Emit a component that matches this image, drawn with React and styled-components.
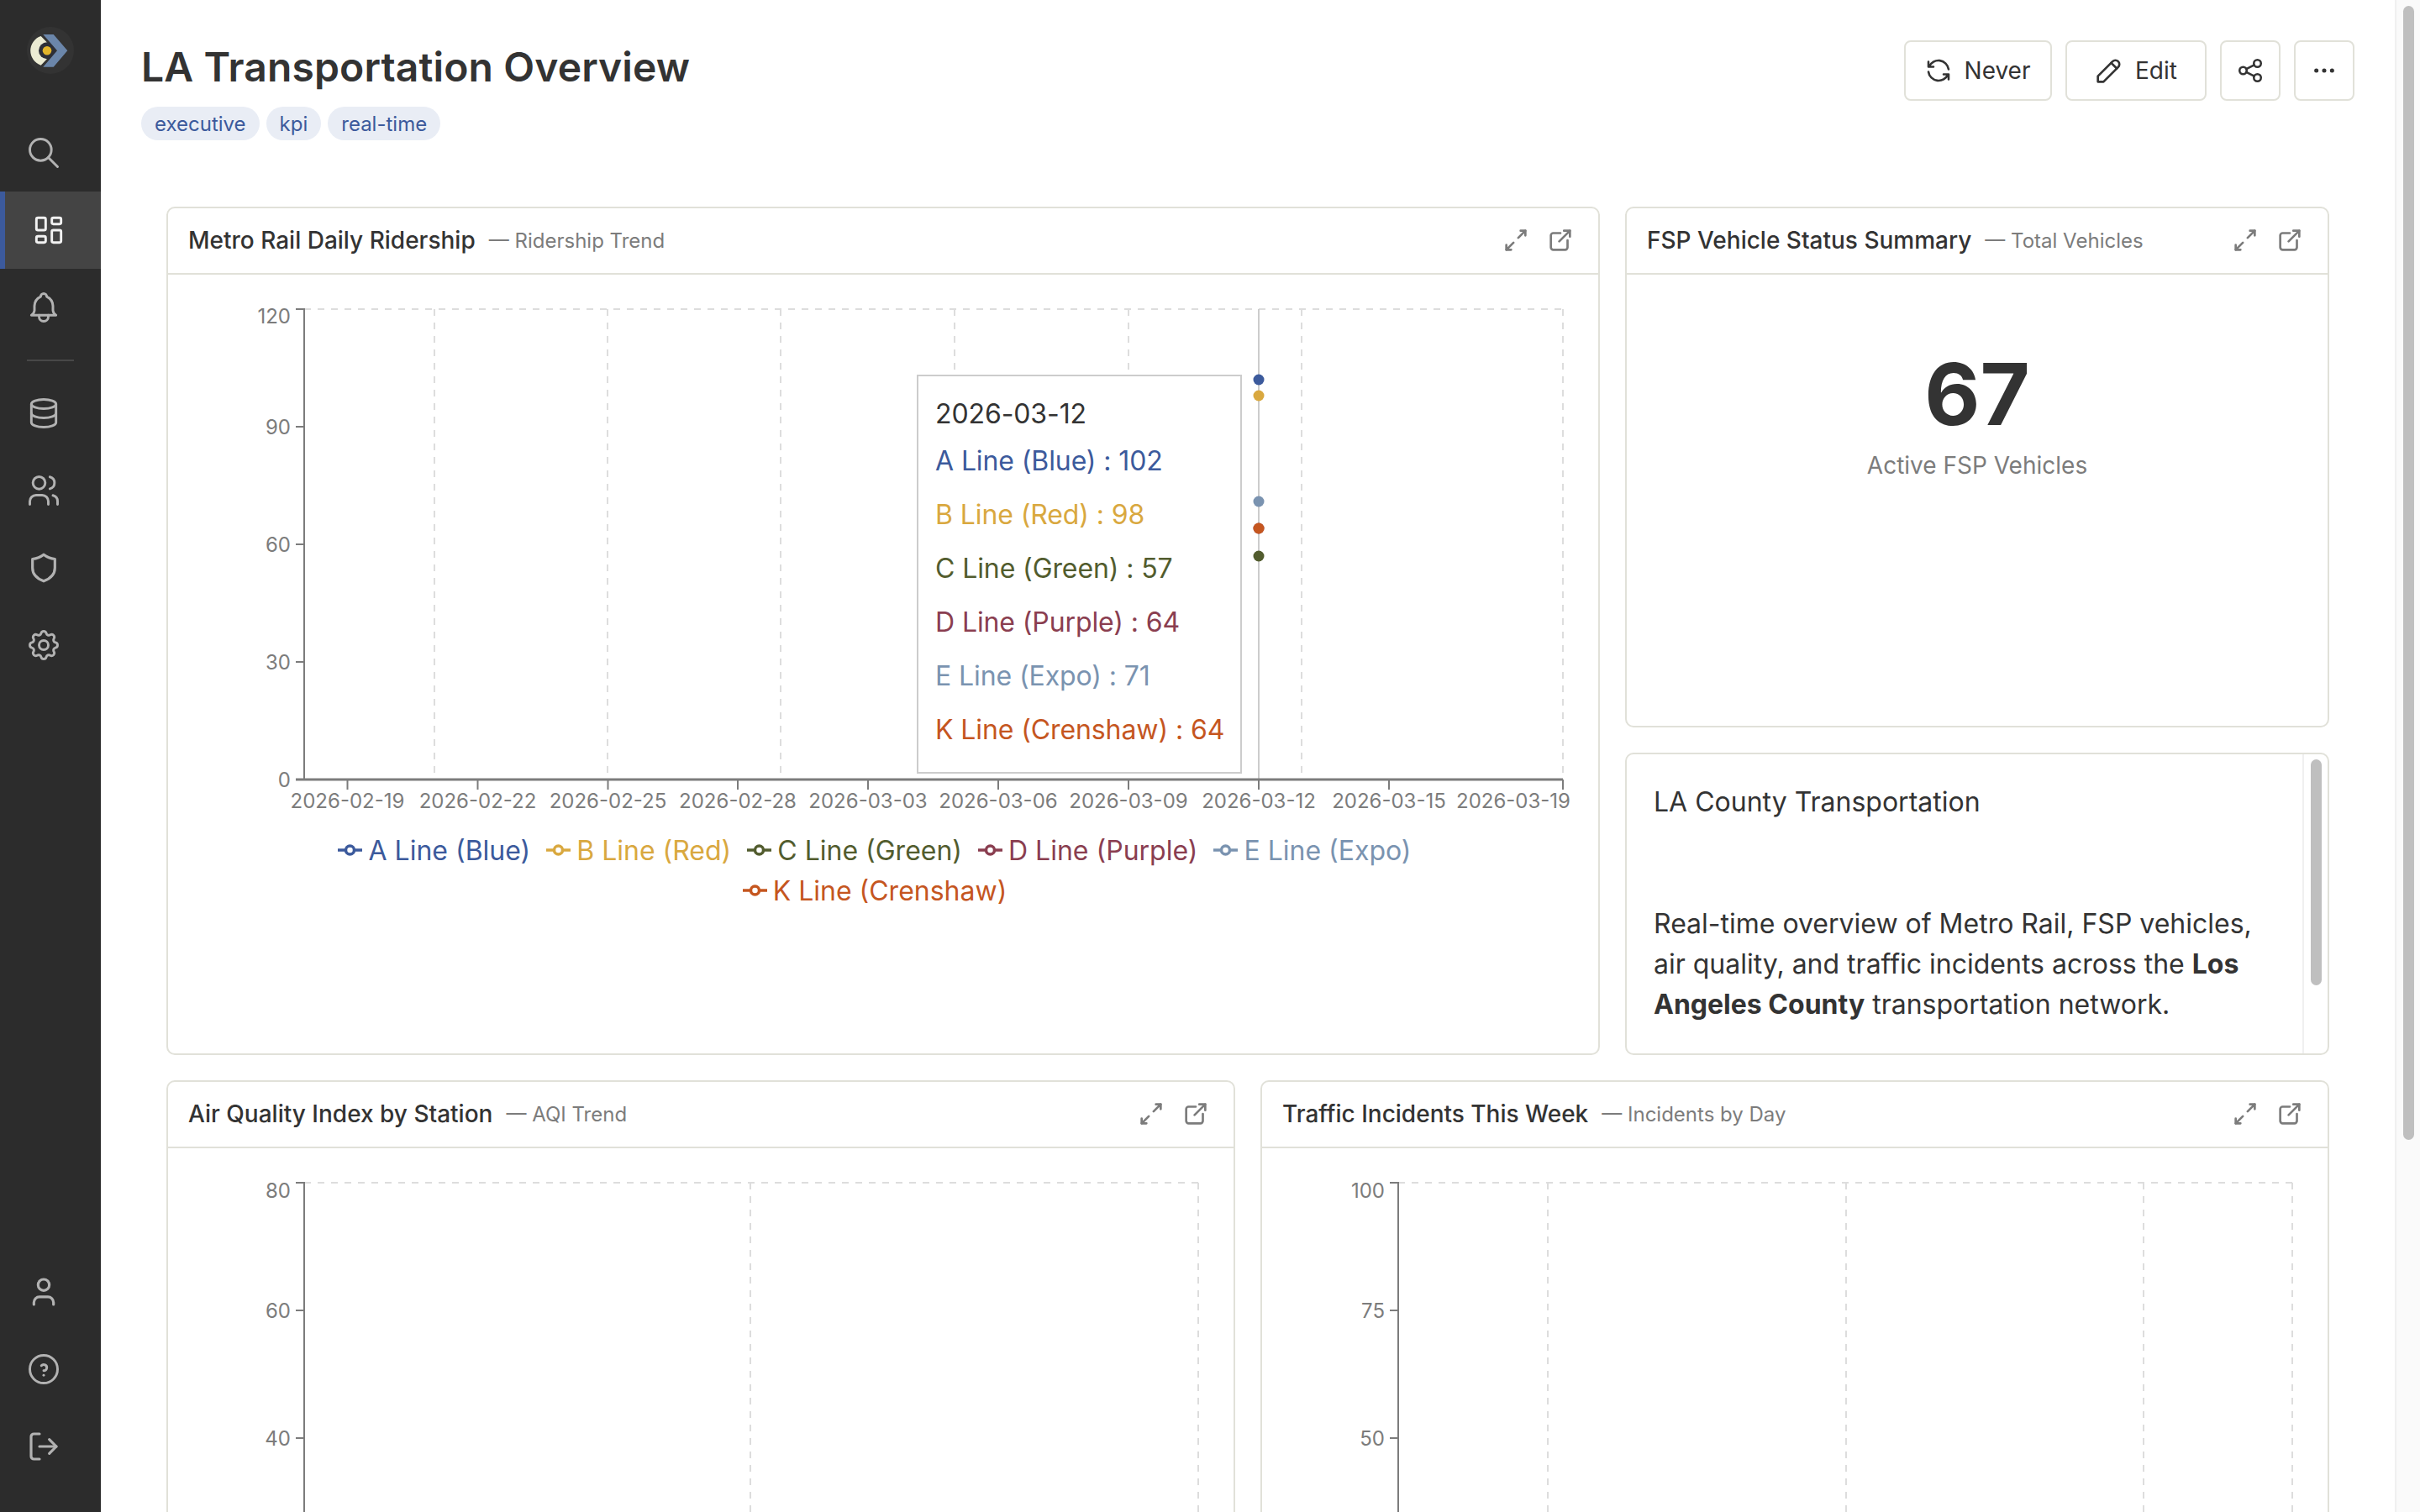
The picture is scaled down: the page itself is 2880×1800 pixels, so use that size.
import React from "react";
import styled, { createGlobalStyle } from "styled-components";
import {
  TbSearch, TbLayoutDashboard, TbBell, TbDatabase, TbUsers, TbSettings,
  TbHelpCircle, TbRefresh, TbPencil, TbShare, TbDots, TbArrowsDiagonal, TbExternalLink,
} from "react-icons/tb";
import { LogOut } from "lucide-react";

const INK = "#333333";
const LINE = "#e1e1d9";
const AXIS = "#7c7c7c";
const FONT = `Inter, "Noto Sans", sans-serif`;

const SERIES = [
  { name: "A Line (Blue)", value: 102, color: "#3c5a9c", y: 452 },
  { name: "B Line (Red)", value: 98, color: "#d9a83f", y: 471 },
  { name: "C Line (Green)", value: 57, color: "#525c2e", y: 662 },
  { name: "D Line (Purple)", value: 64, color: "#8a3e50", y: 629 },
  { name: "E Line (Expo)", value: 71, color: "#7a93b0", y: 597 },
  { name: "K Line (Crenshaw)", value: 64, color: "#c5561f", y: 629 },
];

const Global = createGlobalStyle`
  html, body { margin: 0; padding: 0; background: #fff; }
  body { font-family: ${FONT}; color: ${INK}; }
  * { box-sizing: border-box; }
`;

const Shell = styled.div`
  display: flex;
  width: 2880px;
  height: 1800px;
  overflow: hidden;
  background: #fff;
`;

const Sidebar = styled.nav`
  flex: 0 0 120px;
  height: 100%;
  display: flex;
  flex-direction: column;
  background: #2c2c2c;
  padding-bottom: 32px;
`;

const LogoBox = styled.div`
  height: 136px;
  padding: 32px 0 0 32px;
`;

const NavItem = styled.div`
  height: 92px;
  display: flex;
  align-items: center;
  justify-content: center;
  padding-right: ${(p) => (p.$active ? "10px" : "16px")};
  color: ${(p) => (p.$active ? "#f2f2f2" : "#b2b2b2")};
  background: ${(p) => (p.$active ? "#444444" : "transparent")};
  border-left: ${(p) => (p.$active ? "6px solid #3c5a9c" : "0")};
`;

const NavDivider = styled.div`
  width: 56px;
  height: 2px;
  margin: 16px 0 16px 32px;
  background: #484848;
`;

const NavSpacer = styled.div`
  flex: 1;
`;

const Main = styled.main`
  flex: 1;
  min-width: 0;
  height: 100%;
  overflow: hidden;
`;

const PageScrollTrack = styled.div`
  flex: 0 0 30px;
  height: 100%;
  padding: 7px 7px 0 8px;
  background: #fafafa;
  border-left: 2px solid #f0f0f0;
`;

const PageScrollThumb = styled.div`
  height: 1350px;
  border-radius: 8px;
  background: #bfbfbf;
`;

const PageHeader = styled.header`
  display: flex;
  justify-content: space-between;
  align-items: flex-start;
  padding: 48px 48px 0 48px;
`;

const TitleBlock = styled.div`
  display: flex;
  flex-direction: column;
  gap: 17px;
  margin-top: 2px;
`;

const PageTitle = styled.h1`
  margin: 0;
  font-size: 48px;
  line-height: 60px;
  font-weight: 600;
  letter-spacing: 0.12px;
  color: ${INK};
`;

const TagRow = styled.div`
  display: flex;
  gap: 8px;
`;

const Tag = styled.span`
  height: 40px;
  padding: 0 16px;
  display: flex;
  align-items: center;
  border-radius: 20px;
  background: #e9edf5;
  color: #3c5a9c;
  font-size: 24px;
`;

const Actions = styled.div`
  display: flex;
  gap: 16px;
`;

const ActionButton = styled.button`
  height: 72px;
  width: ${(p) => p.$w}px;
  display: flex;
  align-items: center;
  justify-content: center;
  gap: ${(p) => p.$gap ?? 14}px;
  padding: 0 ${(p) => p.$inset ?? 0}px 0 0;
  background: #fff;
  border: 2px solid ${LINE};
  border-radius: 8px;
  color: ${INK};
  font-family: ${FONT};
  font-size: 28px;
  font-weight: 400;
`;

const Dashboard = styled.div`
  display: flex;
  flex-direction: column;
  gap: 30px;
  padding: 79px 78px 0 78px;
`;

const TopRow = styled.div`
  display: grid;
  grid-template-columns: 1706px 838px;
  gap: 30px;
  height: 1010px;
`;

const SideColumn = styled.div`
  display: grid;
  grid-template-rows: 620px 360px;
  gap: 30px;
`;

const BottomRow = styled.div`
  display: grid;
  grid-template-columns: 1fr 1fr;
  gap: 30px;
  height: 1000px;
`;

const Card = styled.section`
  border: 2px solid ${LINE};
  border-radius: 10px;
  background: #fff;
  overflow: hidden;
  display: flex;
  flex-direction: column;
`;

const CardHeader = styled.div`
  flex: 0 0 79px;
  display: flex;
  align-items: center;
  padding: 0 28px 1px 24px;
  border-bottom: 2px solid ${LINE};
`;

const CardTitle = styled.h2`
  margin: 0;
  font-size: 28px;
  font-weight: 500;
  color: ${INK};
`;

const CardSubtitle = styled.span`
  margin-left: 16px;
  font-size: 24px;
  color: ${AXIS};
`;

const CardTools = styled.div`
  margin-left: auto;
  display: flex;
  gap: 19px;
  color: ${AXIS};
`;

const ChartBody = styled.div`
  position: relative;
  flex: 1;
`;

const ChartSvg = styled.svg`
  display: block;
`;

const AxisLabel = styled.text`
  font-family: ${FONT};
  font-size: 24px;
  fill: ${AXIS};
`;

const Legend = styled.div`
  display: flex;
  flex-wrap: wrap;
  justify-content: center;
  column-gap: 19px;
  width: 1400px;
  margin: 11px 0 0 141px;
`;

const LegendItem = styled.div`
  display: flex;
  align-items: center;
  gap: 7px;
  height: 48px;
  font-size: 32px;
  color: ${(p) => p.$color};
`;

const Tooltip = styled.div`
  position: absolute;
  left: 891px;
  top: 119px;
  width: 387px;
  height: 475px;
  padding: 21px 20px;
  border: 2px solid #cccccc;
  background: #fff;
  font-size: 32px;
  letter-spacing: -0.1px;
`;

const TooltipDate = styled.div`
  height: 48px;
  line-height: 48px;
  color: ${INK};
`;

const TooltipRow = styled.div`
  height: 64px;
  line-height: 64px;
  white-space: nowrap;
  color: ${(p) => p.$color};
`;

const BigNumberBody = styled.div`
  flex: 1;
  display: flex;
  flex-direction: column;
  align-items: center;
  padding-top: 94px;
`;

const BigNumber = styled.div`
  font-size: 102px;
  line-height: 96px;
  font-weight: 700;
  color: ${INK};
`;

const BigNumberLabel = styled.div`
  margin-top: 17px;
  font-size: 28px;
  line-height: 40px;
  color: ${AXIS};
`;

const TextCard = styled(Card)`
  flex-direction: row;
`;

const Markdown = styled.div`
  flex: 1;
  min-width: 0;
  padding: 33px 34px 0 32px;
  font-size: 32px;
  line-height: 48px;
  color: ${INK};
`;

const MarkdownHeading = styled.h3`
  margin: 0 0 97px;
  font-size: 32px;
  line-height: 48px;
  font-weight: 400;
`;

const MarkdownParagraph = styled.p`
  margin: 0;
  strong { font-weight: 700; }
`;

const InnerScrollTrack = styled.div`
  flex: 0 0 30px;
  padding: 6px 7px 0 8px;
  border-left: 2px solid #f0f0f0;
`;

const InnerScrollThumb = styled.div`
  height: 269px;
  border-radius: 8px;
  background: #bfbfbf;
`;

const Logo = () => (
  <svg width="56" height="56" viewBox="0 0 56 56">
    <circle cx="28" cy="28" r="28" fill="#333333" />
    <path d="M16.7 11A18.3 18.3 0 0 0 16.7 45.7L33.3 28.3Z" fill="#ebebd3" />
    <circle cx="24" cy="28.3" r="10" fill="#2d2f38" />
    <circle cx="24" cy="28.3" r="5.3" fill="#e3b52a" />
    <path d="M19.3 9H31.7L48.3 28.3L31.7 47.7H19.3L36 28.3Z" fill="#6b86aa" />
  </svg>
);

const ShieldIcon = () => (
  <svg width="40" height="40" viewBox="0 0 24 24" fill="none" stroke="currentColor" strokeWidth="1.9" strokeLinecap="round" strokeLinejoin="round">
    <path d="M12 2.5c2.3 1.8 4.8 2.8 8 3.2v6.3c0 4.6-3.2 7.7-8 9.5c-4.8-1.8-8-4.9-8-9.5V5.7c3.2-.4 5.7-1.4 8-3.2Z" />
  </svg>
);

const UserIcon = () => (
  <svg width="40" height="40" viewBox="0 0 24 24" fill="none" stroke="currentColor" strokeWidth="1.9" strokeLinecap="round" strokeLinejoin="round">
    <circle cx="12" cy="7" r="4" />
    <path d="M5 21v-1.5a4 4 0 0 1 4-4h6a4 4 0 0 1 4 4V21" />
  </svg>
);

const Toolset = () => (
  <CardTools>
    <TbArrowsDiagonal size={34} strokeWidth={1.9} />
    <TbExternalLink size={34} strokeWidth={1.9} />
  </CardTools>
);

const Head = ({ title, sub }) => (
  <CardHeader>
    <CardTitle>{title}</CardTitle>
    <CardSubtitle>— {sub}</CardSubtitle>
    <Toolset />
  </CardHeader>
);

const Axes = ({ x0, x1, top, bottom, vgrid, yticks }) => (
  <>
    <path d={`M${x0} ${top}H${x1}`} stroke="#dddddd" strokeWidth="2" strokeDasharray="8 8" fill="none" />
    {vgrid.map((x) => (
      <path key={x} d={`M${x} ${top}V${bottom}`} stroke="#dddddd" strokeWidth="2" strokeDasharray="8 8" fill="none" />
    ))}
    <path d={`M${x0} ${top - 1}V${bottom}`} stroke={AXIS} strokeWidth="2" fill="none" />
    {yticks.map((t) => (
      <React.Fragment key={t.label}>
        <path d={`M${x0 - 10} ${t.y}H${x0}`} stroke={AXIS} strokeWidth="2" fill="none" />
        <AxisLabel x={x0 - 16} y={t.ly ?? t.y} textAnchor="end" dominantBaseline="central">{t.label}</AxisLabel>
      </React.Fragment>
    ))}
  </>
);

const X_TICKS = [
  [413.5, "2026-02-19", 413.5], [568.5, "2026-02-22", 568.5], [723.5, "2026-02-25", 723.5],
  [878, "2026-02-28", 878], [1033, "2026-03-03", 1033], [1188, "2026-03-06", 1188],
  [1343, "2026-03-09", 1343], [1498, "2026-03-12", 1498], [1653, "2026-03-15", 1653],
  [1860, "2026-03-19", 1801],
];

const RidershipChart = () => (
  <ChartBody>
    <ChartSvg width="1702" height="650" viewBox="200 327 1702 650">
      <Axes
        x0={362} x1={1860} top={368} bottom={928}
        vgrid={[517, 723, 929, 1136, 1343, 1549, 1860]}
        yticks={[
          { label: "120", y: 368, ly: 376 },
          { label: "90", y: 508 },
          { label: "60", y: 648 },
          { label: "30", y: 788 },
          { label: "0", y: 928 },
        ]}
      />
      <path d="M1498 368V928" stroke="#cccccc" strokeWidth="2" fill="none" />
      <path d="M352 928H1860" stroke={AXIS} strokeWidth="3" fill="none" />
      {X_TICKS.map(([x, label, lx]) => (
        <React.Fragment key={label}>
          <path d={`M${x} 928V940`} stroke={AXIS} strokeWidth="2" fill="none" />
          <AxisLabel x={lx} y={953} textAnchor="middle" dominantBaseline="central">{label}</AxisLabel>
        </React.Fragment>
      ))}
      {SERIES.map((s) => (
        <circle key={s.name} cx="1498" cy={s.y} r="6.5" fill={s.color} />
      ))}
    </ChartSvg>
    <Tooltip>
      <TooltipDate>2026-03-12</TooltipDate>
      {SERIES.map((s) => (
        <TooltipRow key={s.name} $color={s.color}>{s.name} : {s.value}</TooltipRow>
      ))}
    </Tooltip>
    <Legend>
      {SERIES.map((s) => (
        <LegendItem key={s.name} $color={s.color}>
          <svg width="29" height="14" viewBox="0 0 29 14">
            <path d="M0 7H29" stroke={s.color} strokeWidth="3.5" />
            <circle cx="14.5" cy="7" r="5" fill="#fff" stroke={s.color} strokeWidth="3.5" />
          </svg>
          {s.name}
        </LegendItem>
      ))}
    </Legend>
  </ChartBody>
);

const LowerChart = ({ left, width, x0, x1, vgrid, yticks }) => (
  <ChartBody>
    <ChartSvg width={width} height="500" viewBox={`${left} 1367 ${width} 500`}>
      <Axes x0={x0} x1={x1} top={1408} bottom={1867} vgrid={vgrid} yticks={yticks} />
    </ChartSvg>
  </ChartBody>
);

export default function App() {
  return (
    <Shell>
      <Global />
      <Sidebar>
        <LogoBox><Logo /></LogoBox>
        <NavItem><TbSearch size={44} strokeWidth={1.6} /></NavItem>
        <NavItem $active><TbLayoutDashboard size={44} strokeWidth={1.6} /></NavItem>
        <NavItem><TbBell size={44} strokeWidth={1.6} /></NavItem>
        <NavDivider />
        <NavItem><TbDatabase size={44} strokeWidth={1.6} /></NavItem>
        <NavItem><TbUsers size={44} strokeWidth={1.6} /></NavItem>
        <NavItem><ShieldIcon /></NavItem>
        <NavItem><TbSettings size={44} strokeWidth={1.6} /></NavItem>
        <NavSpacer />
        <NavItem><UserIcon /></NavItem>
        <NavItem><TbHelpCircle size={44} strokeWidth={1.6} /></NavItem>
        <NavItem><LogOut size={40} strokeWidth={1.9} /></NavItem>
      </Sidebar>
      <Main>
        <PageHeader>
          <TitleBlock>
            <PageTitle>LA Transportation Overview</PageTitle>
            <TagRow>
              <Tag>executive</Tag>
              <Tag>kpi</Tag>
              <Tag>real-time</Tag>
            </TagRow>
          </TitleBlock>
          <Actions>
            <ActionButton $w={176} $gap={13} $inset={3}><TbRefresh size={36} strokeWidth={1.7} />Never</ActionButton>
            <ActionButton $w={168} $gap={11} $inset={3}><TbPencil size={40} strokeWidth={1.6} />Edit</ActionButton>
            <ActionButton $w={72}><TbShare size={34} strokeWidth={1.8} /></ActionButton>
            <ActionButton $w={72}><TbDots size={32} strokeWidth={1.8} /></ActionButton>
          </Actions>
        </PageHeader>
        <Dashboard>
          <TopRow>
            <Card>
              <Head title="Metro Rail Daily Ridership" sub="Ridership Trend" />
              <RidershipChart />
            </Card>
            <SideColumn>
              <Card>
                <Head title="FSP Vehicle Status Summary" sub="Total Vehicles" />
                <BigNumberBody>
                  <BigNumber>67</BigNumber>
                  <BigNumberLabel>Active FSP Vehicles</BigNumberLabel>
                </BigNumberBody>
              </Card>
              <TextCard>
                <Markdown>
                  <MarkdownHeading>LA County Transportation</MarkdownHeading>
                  <MarkdownParagraph>
                    Real-time overview of Metro Rail, FSP vehicles, air quality, and traffic incidents across the <strong>Los Angeles County</strong> transportation network.
                  </MarkdownParagraph>
                </Markdown>
                <InnerScrollTrack><InnerScrollThumb /></InnerScrollTrack>
              </TextCard>
            </SideColumn>
          </TopRow>
          <BottomRow>
            <Card>
              <Head title="Air Quality Index by Station" sub="AQI Trend" />
              <LowerChart
                left={200} width={1268} x0={362} x1={1426}
                vgrid={[893, 1426]}
                yticks={[{ label: "80", y: 1408, ly: 1417 }, { label: "60", y: 1560 }, { label: "40", y: 1712 }]}
              />
            </Card>
            <Card>
              <Head title="Traffic Incidents This Week" sub="Incidents by Day" />
              <LowerChart
                left={1502} width={1268} x0={1664} x1={2728}
                vgrid={[1842, 2197, 2551, 2728]}
                yticks={[{ label: "100", y: 1408, ly: 1417 }, { label: "75", y: 1560 }, { label: "50", y: 1712 }]}
              />
            </Card>
          </BottomRow>
        </Dashboard>
      </Main>
      <PageScrollTrack><PageScrollThumb /></PageScrollTrack>
    </Shell>
  );
}
